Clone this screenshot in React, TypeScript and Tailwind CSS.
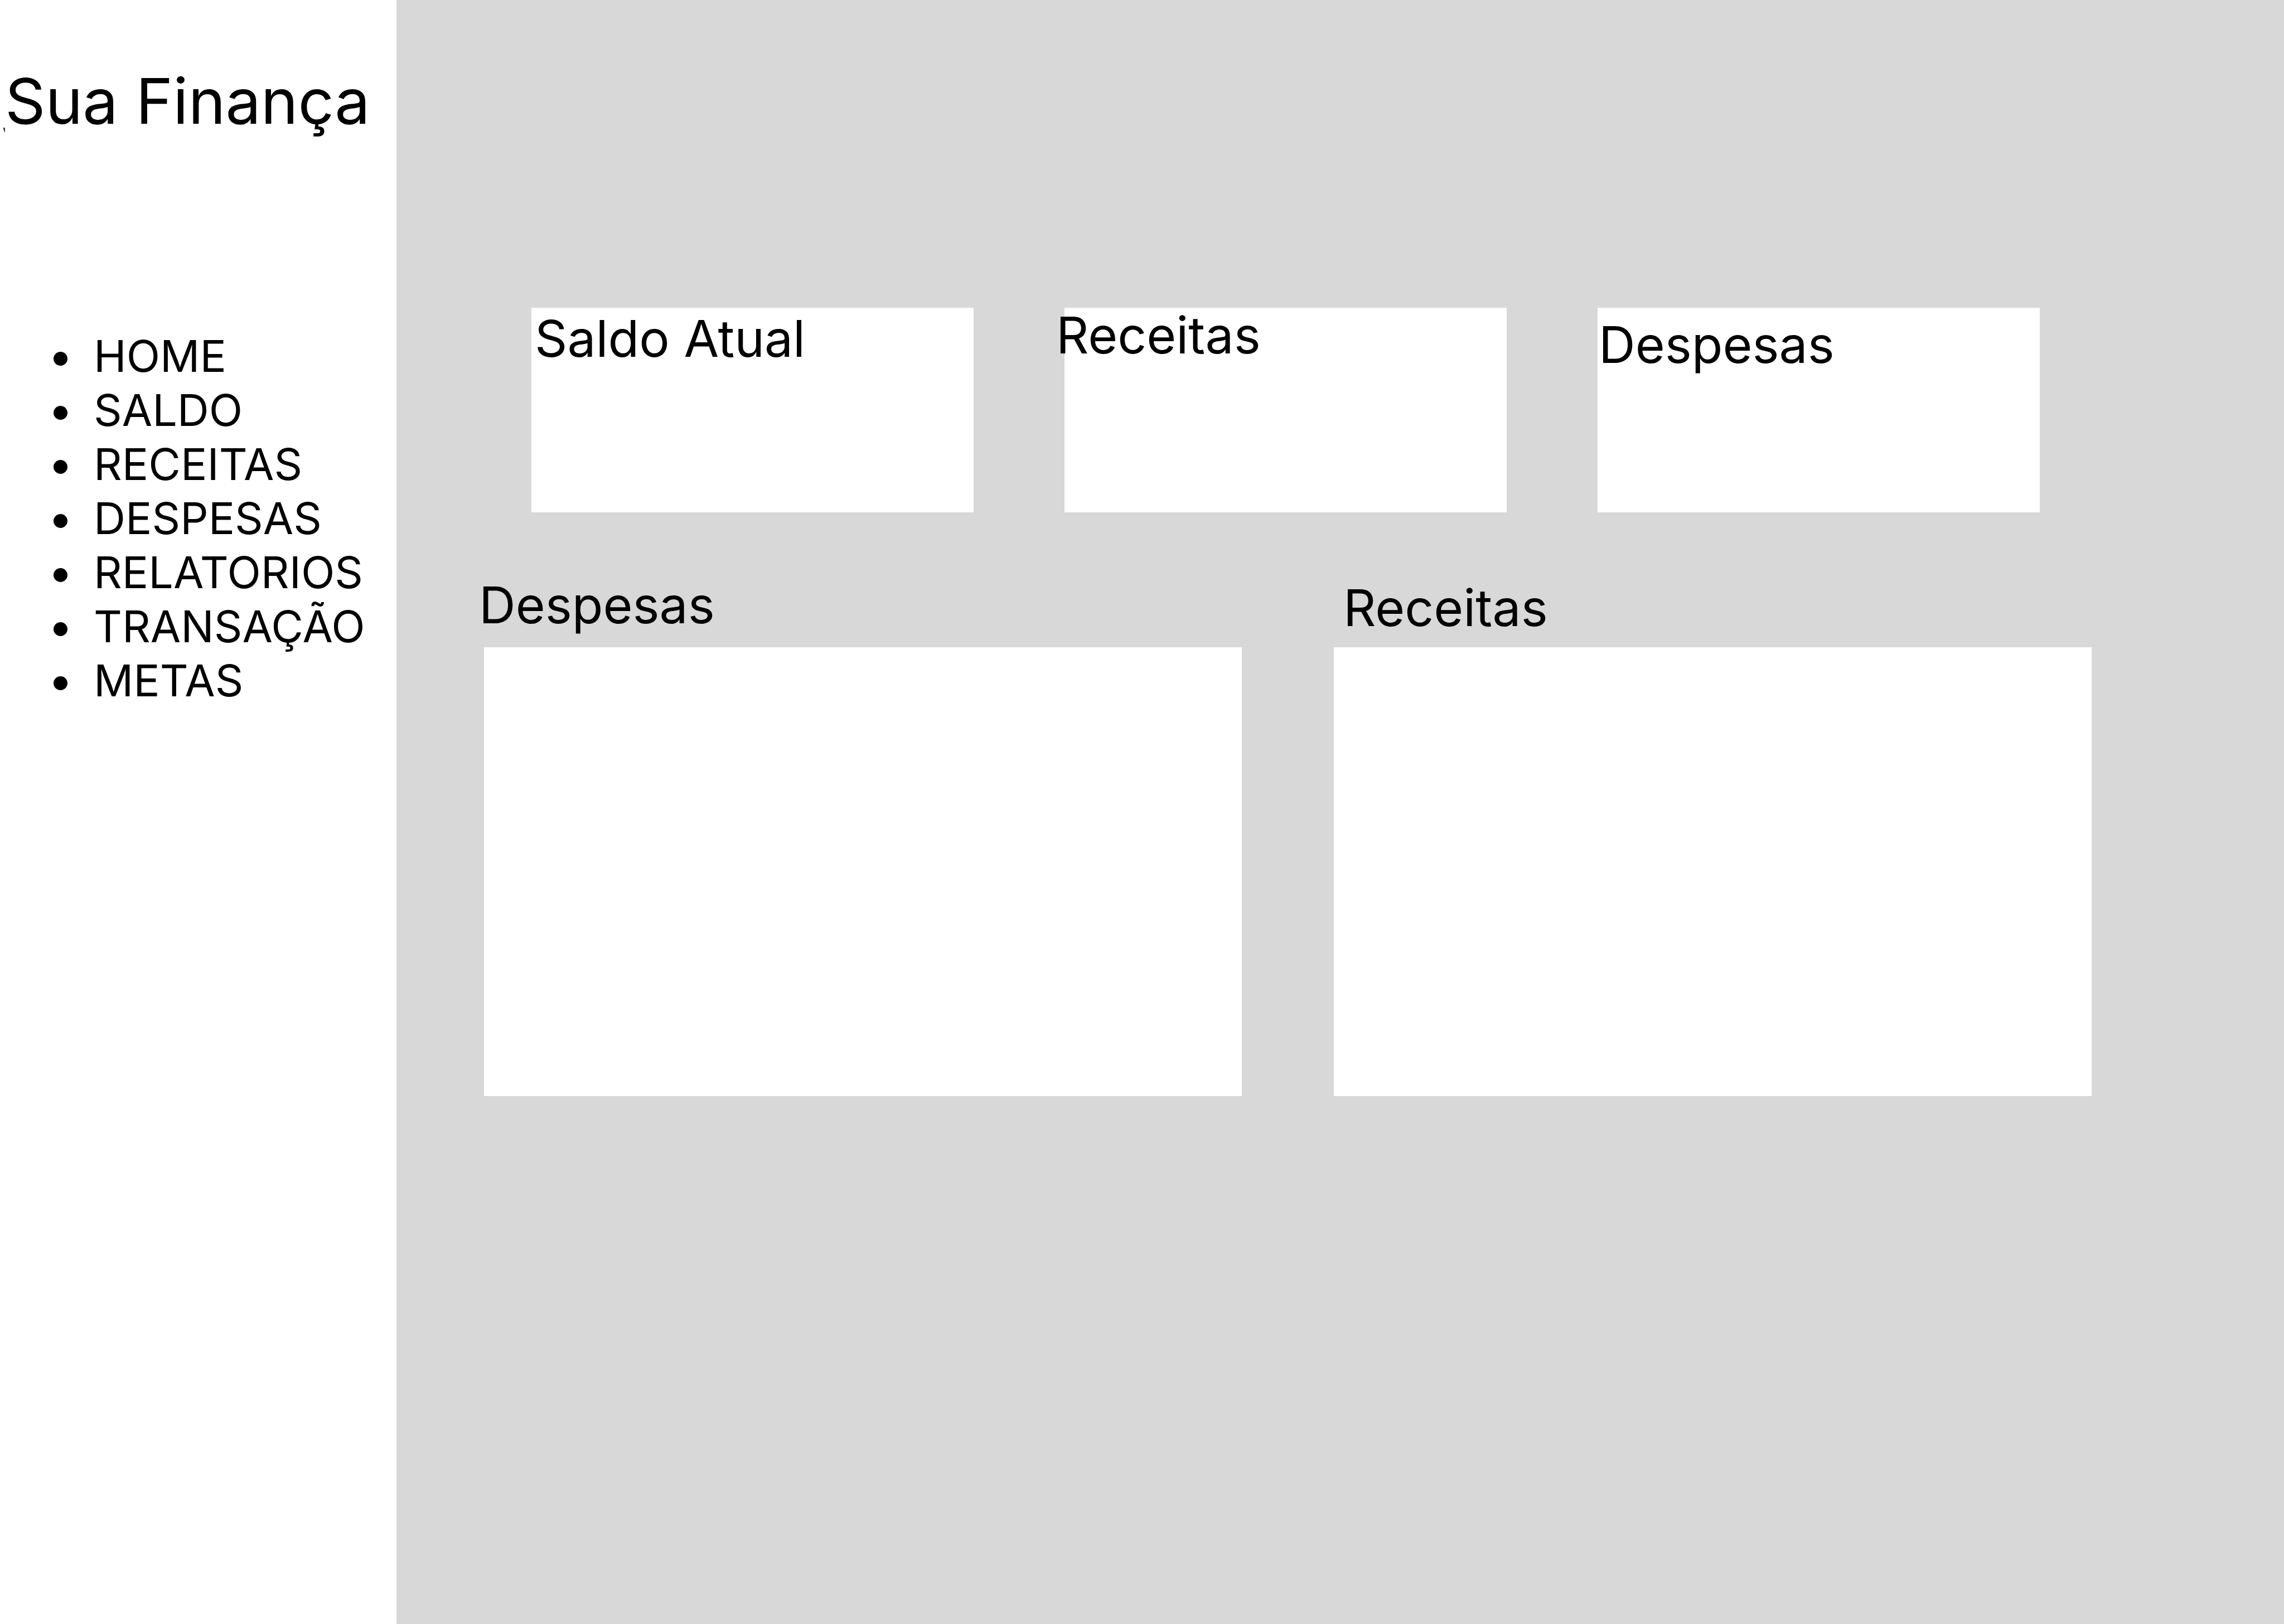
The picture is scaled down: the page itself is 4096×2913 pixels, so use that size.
const menu = ["HOME", "SALDO", "RECEITAS", "DESPESAS", "RELATORIOS", "TRANSAÇÃO", "METAS"];

const cards = [
  { title: "Saldo Atual", place: "ml-[6px]" },
  { title: "Receitas", place: "-ml-[15px] -mt-[6px]" },
  { title: "Despesas", place: "ml-[2px] mt-[11px]" },
];

const panels = [
  { title: "Despesas", place: "-ml-[9px] mb-[21px]" },
  { title: "Receitas", place: "ml-[17px] mb-[16px]" },
];

const heading = "text-[91px] leading-[110px] font-normal whitespace-nowrap";

export default function App() {
  return (
    <div className="flex min-h-screen bg-[#d8d8d8] font-['Inter',sans-serif] text-black">
      <aside className="w-[711px] shrink-0 bg-white pt-[112px]">
        <h1 className="relative pl-[9px] text-[113px] leading-[138px] font-normal whitespace-nowrap">
          Sua Finança
          <svg className="absolute top-[117px] left-[6px] h-[9px] w-[3px]" viewBox="0 0 3 9" aria-hidden="true">
            <path d="M0 0h2.6v9L1 5z" />
          </svg>
        </h1>
        <nav className="mt-[340px]" aria-label="Menu principal">
          <ul>
            {menu.map((item) => (
              <li key={item} className="flex items-center pl-[96px] text-[79px] leading-[97px]">
                <span className="mt-[9px] mr-[47px] size-[25px] rounded-full bg-black" />
                <a href="#">{item}</a>
              </li>
            ))}
          </ul>
        </nav>
      </aside>

      <main className="min-w-0 flex-1 pt-[552px]">
        <div className="grid grid-cols-3 gap-[163px] pr-[438px] pl-[242px]">
          {cards.map((card) => (
            <section key={card.title} className="flex min-h-[367px] items-start bg-white">
              <h2 className={`${heading} ${card.place}`}>{card.title}</h2>
            </section>
          ))}
        </div>

        <div className="mt-[111px] grid grid-cols-2 items-end gap-[165px] pr-[345px] pl-[157px]">
          {panels.map((panel) => (
            <section key={panel.title} className="flex flex-col">
              <h2 className={`${heading} ${panel.place}`}>{panel.title}</h2>
              <div className="min-h-[805px] bg-white" />
            </section>
          ))}
        </div>
      </main>
    </div>
  );
}
